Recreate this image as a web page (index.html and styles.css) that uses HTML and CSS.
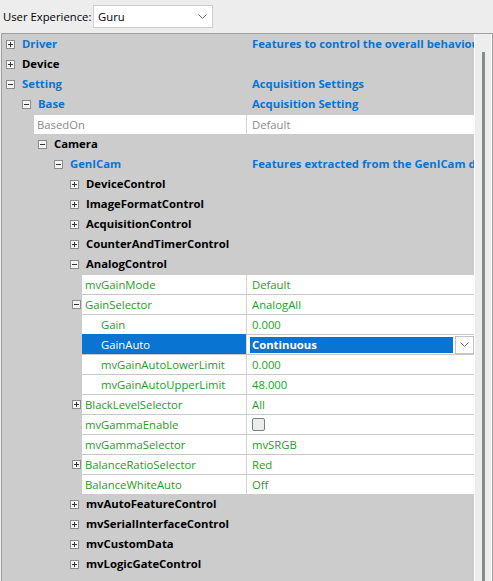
FILE: index.html
```html
<!DOCTYPE html>
<html>
<head>
	<meta charset="utf-8">
	<title>Property Grid</title>
	<link rel="stylesheet" href="styles.css">
</head>
<body>
	<div class="toolbar">
		<span class="lbl">User Experience:</span>
		<div class="combo">
			<span>Guru</span>
			<svg class="chev" width="9" height="5" viewBox="0 0 9 5"><path d="M0.5 0.5 L4.5 4.5 L8.5 0.5" fill="none" stroke="#6d6d6d" stroke-width="1"/></svg>
		</div>
	</div>

	<div class="frame">
		<div class="tree">
			<div class="row cat d0"><div class="name"><span class="exp plus"></span><span class="blue">Driver</span></div><div class="val blue">Features to control the overall behaviour of the driver</div></div>
			<div class="row cat d0"><div class="name"><span class="exp plus"></span><span>Device</span></div><div class="val"></div></div>
			<div class="row cat d0"><div class="name"><span class="exp"></span><span class="blue">Setting</span></div><div class="val blue">Acquisition Settings</div></div>
			<div class="row cat d1"><div class="name"><span class="exp"></span><span class="blue">Base</span></div><div class="val blue">Acquisition Setting</div></div>
			<div class="row prop g1"><div class="name"><div class="ind"></div><div class="cell grey">BasedOn</div></div><div class="val grey">Default</div></div>
			<div class="row cat d2"><div class="name"><span class="exp"></span><span>Camera</span></div><div class="val"></div></div>
			<div class="row cat d3"><div class="name"><span class="exp"></span><span class="blue">GenICam</span></div><div class="val blue">Features extracted from the GenICam description file</div></div>
			<div class="row cat d4"><div class="name"><span class="exp plus"></span><span>DeviceControl</span></div><div class="val"></div></div>
			<div class="row cat d4"><div class="name"><span class="exp plus"></span><span>ImageFormatControl</span></div><div class="val"></div></div>
			<div class="row cat d4"><div class="name"><span class="exp plus"></span><span>AcquisitionControl</span></div><div class="val"></div></div>
			<div class="row cat d4"><div class="name"><span class="exp plus"></span><span>CounterAndTimerControl</span></div><div class="val"></div></div>
			<div class="row cat d4"><div class="name"><span class="exp"></span><span>AnalogControl</span></div><div class="val"></div></div>
			<div class="row prop g4"><div class="name"><div class="ind"></div><div class="cell">mvGainMode</div></div><div class="val">Default</div></div>
			<div class="row prop g4"><div class="name"><div class="ind"><span class="exp"></span></div><div class="cell">GainSelector</div></div><div class="val">AnalogAll</div></div>
			<div class="row prop g4"><div class="name"><div class="ind"></div><div class="cell sub">Gain</div></div><div class="val">0.000</div></div>
			<div class="row prop g4 active">
				<div class="name"><div class="ind"></div><div class="cell sub">GainAuto</div></div>
				<div class="val edit">
					<div class="sel">Continuous</div>
					<div class="drop"><svg width="9" height="5" viewBox="0 0 9 5"><path d="M0.5 0.5 L4.5 4.5 L8.5 0.5" fill="none" stroke="#7a7a7a" stroke-width="1"/></svg></div>
				</div>
			</div>
			<div class="row prop g4"><div class="name"><div class="ind"></div><div class="cell sub">mvGainAutoLowerLimit</div></div><div class="val">0.000</div></div>
			<div class="row prop g4"><div class="name"><div class="ind"></div><div class="cell sub">mvGainAutoUpperLimit</div></div><div class="val">48.000</div></div>
			<div class="row prop g4"><div class="name"><div class="ind"><span class="exp plus"></span></div><div class="cell">BlackLevelSelector</div></div><div class="val">All</div></div>
			<div class="row prop g4"><div class="name"><div class="ind"></div><div class="cell">mvGammaEnable</div></div><div class="val"><span class="check"></span></div></div>
			<div class="row prop g4"><div class="name"><div class="ind"></div><div class="cell">mvGammaSelector</div></div><div class="val">mvSRGB</div></div>
			<div class="row prop g4"><div class="name"><div class="ind"><span class="exp plus"></span></div><div class="cell">BalanceRatioSelector</div></div><div class="val">Red</div></div>
			<div class="row prop g4"><div class="name"><div class="ind"></div><div class="cell">BalanceWhiteAuto</div></div><div class="val">Off</div></div>
			<div class="row cat d4"><div class="name"><span class="exp plus"></span><span>mvAutoFeatureControl</span></div><div class="val"></div></div>
			<div class="row cat d4"><div class="name"><span class="exp plus"></span><span>mvSerialInterfaceControl</span></div><div class="val"></div></div>
			<div class="row cat d4"><div class="name"><span class="exp plus"></span><span>mvCustomData</span></div><div class="val"></div></div>
			<div class="row cat d4"><div class="name"><span class="exp plus"></span><span>mvLogicGateControl</span></div><div class="val"></div></div>
		</div>
		<div class="scroll"><div class="thumb"></div></div>
	</div>
</body>
</html>
```

FILE: styles.css
```css
* {
	box-sizing: border-box;
}
html, body {
	margin: 0;
	height: 581px;
	background: #ededed;
	font-family: "Open Sans", "Noto Sans", sans-serif;
	font-size: 11.3px;
	color: #000;
	overflow: hidden;
}

.toolbar {
	height: 33px;
	display: flex;
	align-items: center;
	padding-left: 3px;
}
.lbl {
	width: 90px;
	flex: none;
	white-space: nowrap;
}
.combo {
	width: 120px;
	height: 23px;
	border: 1px solid #cfcfcf;
	background: #fff;
	display: flex;
	align-items: center;
	justify-content: space-between;
	padding: 0 5px 0 4px;
}

.frame {
	display: flex;
	height: 548px;
	margin-left: 1px;
	border-top: 1px solid #a0a0a0;
	border-left: 1px solid #a0a0a0;
	border-right: 1px solid #a0a0a0;
	overflow: hidden;
}
.tree {
	width: 472px;
	flex: none;
	background: #cccccc;
	overflow: hidden;
}
.scroll {
	width: 18px;
	flex: none;
	background: #ededed;
	border-left: 1px solid #fff;
	border-right: 1px solid #fff;
}
.thumb {
	width: 3px;
	margin: 18px 0 0 7px;
	height: 540px;
	background: #858e8c;
}

.row {
	display: flex;
	height: 20px;
	line-height: 20px;
	white-space: nowrap;
}
.name {
	width: 244px;
	display: flex;
	align-items: center;
	flex: none;
}
.val {
	flex: 1;
	overflow: hidden;
	padding-left: 5px;
	border-left: 1px solid transparent;
}

.cat {
	font-weight: bold;
}
.d0 .name { padding-left: 4px; }
.d1 .name { padding-left: 20px; }
.d2 .name { padding-left: 36px; }
.d3 .name { padding-left: 52px; }
.d4 .name { padding-left: 68px; }
.blue {
	color: #0a74d2;
}

.exp {
	width: 9px;
	height: 9px;
	border: 1px solid #8c8c8c;
	background: #f4f4f4;
	margin-right: 7px;
	position: relative;
	flex: none;
}
.exp::before {
	content: "";
	position: absolute;
	left: 1px;
	top: 3px;
	width: 5px;
	height: 1px;
	background: #333;
}
.exp.plus::after {
	content: "";
	position: absolute;
	left: 3px;
	top: 1px;
	width: 1px;
	height: 5px;
	background: #333;
}

.prop .name {
	align-items: stretch;
}
.prop .ind {
	display: flex;
	align-items: center;
	justify-content: flex-end;
	padding-right: 1px;
}
.prop .ind .exp {
	margin-right: 0;
}
.g1 .ind { width: 32px; }
.g4 .ind { width: 80px; }
.prop .cell {
	flex: 1;
	background: #fff;
	border-top: 1px solid #c8c8c8;
	line-height: 19px;
	padding-left: 3px;
	color: #1c9f1c;
}
.prop .cell.sub {
	padding-left: 19px;
}
.prop .val {
	background: #fff;
	border-top: 1px solid #c8c8c8;
	border-left-color: #d4d4d4;
	line-height: 19px;
	color: #1c9f1c;
}
.prop .grey {
	color: #8a8a8a;
}

.active .cell {
	background: #0a74d2;
	border-top-color: #0a74d2;
	color: #fff;
}
.prop .val.edit {
	padding-left: 3px;
	display: flex;
	align-items: center;
}
.sel {
	width: 203px;
	height: 16px;
	line-height: 16px;
	padding-left: 2px;
	background: #0a74d2;
	color: #fff;
	font-weight: bold;
}
.drop {
	width: 19px;
	height: 18px;
	margin-left: 2px;
	border: 1px solid #c4c4c4;
	background: #fff;
	display: flex;
	align-items: center;
	justify-content: center;
}

.check {
	display: inline-block;
	width: 13px;
	height: 13px;
	margin-top: 3px;
	border: 1.5px solid #728280;
	border-radius: 2px;
	background: #ececec;
	vertical-align: top;
}
```
